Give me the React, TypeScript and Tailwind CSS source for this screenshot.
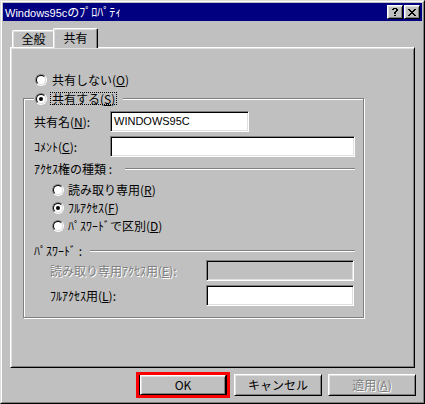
import type { ReactNode } from "react";

const raised =
  "border border-t-white border-l-white border-b-black border-r-black shadow-[inset_1px_1px_0_#dfdfdf,inset_-1px_-1px_0_#808080]";
const sunken =
  "border border-t-[#808080] border-l-[#808080] border-b-white border-r-white shadow-[inset_1px_1px_0_#000,inset_-1px_-1px_0_#dfdfdf]";
const disabledText = "text-[#808080] [text-shadow:1px_1px_0_#fff]";

function Key({ k }: { k: string }) {
  return (
    <>
      (<span className="underline underline-offset-1">{k}</span>)
    </>
  );
}

function Radio({ checked = false }: { checked?: boolean }) {
  return (
    <span className="block w-[12px] h-[12px] shrink-0 rounded-full border border-t-[#808080] border-l-[#808080] border-b-white border-r-white">
      <span className="flex items-center justify-center w-full h-full rounded-full border border-t-black border-l-black border-b-[#dfdfdf] border-r-[#dfdfdf] bg-white">
        {checked && <span className="block w-[4px] h-[4px] rounded-full bg-black" />}
      </span>
    </span>
  );
}

function Pixels({ rows }: { rows: string[] }) {
  const w = rows[0].length;
  const rects: ReactNode[] = [];
  rows.forEach((row, y) =>
    row.split("").forEach((c, x) => {
      if (c === "#") rects.push(<rect key={`${x}-${y}`} x={x} y={y} width={1} height={1} />);
    })
  );
  return (
    <svg width={w} height={rows.length} viewBox={`0 0 ${w} ${rows.length}`} shapeRendering="crispEdges" fill="#000">
      {rects}
    </svg>
  );
}

function CaptionButton({ children }: { children: ReactNode }) {
  return <div className={`w-[16px] h-[14px] bg-[#c0c0c0] flex items-center justify-center ${raised}`}>{children}</div>;
}

function Etched({ className = "" }: { className?: string }) {
  return <div className={`h-[2px] border-t border-t-[#808080] border-b border-b-white ${className}`} />;
}

function DlgButton({ children, disabled = false }: { children: ReactNode; disabled?: boolean }) {
  return (
    <div
      className={`w-[88px] h-[22px] bg-[#c0c0c0] flex items-center justify-center pb-[1px] ${raised} ${disabled ? disabledText : ""}`}
    >
      {children}
    </div>
  );
}

export default function App() {
  return (
    <div className="w-[425px] h-[404px] bg-[#c0c0c0] border border-t-[#dfdfdf] border-l-[#dfdfdf] border-b-black border-r-black font-['Noto_Sans_CJK_JP',sans-serif] text-[12px] leading-none text-black">
      <div className="h-full border border-t-white border-l-white border-b-[#808080] border-r-[#808080] p-[1px] flex flex-col">
        {/* title bar */}
        <div className="h-[18px] shrink-0 bg-[#000080] flex items-center justify-between pl-[2px] pr-[2px]">
          <span className="text-white">
            <span className="font-['Liberation_Sans',sans-serif] text-[11px]">Windows95c</span>のﾌﾟﾛﾊﾟﾃｨ
          </span>
          <div className="flex gap-[1px]">
            <CaptionButton>
              <Pixels rows={[".####.", "##..##", "....##", "...##.", "..##..", "..##..", "......", "..##.."]} />
            </CaptionButton>
            <CaptionButton>
              <Pixels rows={["##....##", ".##..##.", "..####..", "...##...", "..####..", ".##..##.", "##....##"]} />
            </CaptionButton>
          </div>
        </div>

        {/* tabs */}
        <div className="h-[26px] shrink-0 flex items-end pl-[9px]">
          <div className="w-[43px] h-[17px] flex items-center justify-center border-t border-l border-t-white border-l-white border-r border-r-black rounded-tl-[2px] rounded-tr-[2px] shadow-[inset_-1px_0_0_#808080,inset_1px_1px_0_#dfdfdf]">
            全般
          </div>
          <div className="relative z-10 -ml-[2px] -mb-[1px] w-[45px] h-[20px] bg-[#c0c0c0] flex items-center justify-center pb-[2px] border-t border-l border-t-white border-l-white border-r border-r-black rounded-tl-[2px] rounded-tr-[2px] shadow-[inset_-1px_0_0_#808080,inset_1px_1px_0_#dfdfdf]">
            共有
          </div>
        </div>

        {/* panel */}
        <div className={`mx-[7px] h-[321px] shrink-0 pl-[12px] pt-[25px] ${raised}`}>
          <div className="flex items-center gap-[5px] h-[13px] ml-[12px]">
            <Radio />
            <span>
              共有しない<Key k="O" />
            </span>
          </div>

          {/* group box */}
          <div className="mt-[12px] w-[341px] h-[220px] border border-[#808080] shadow-[inset_1px_1px_0_#fff,1px_1px_0_#fff] pl-[10px] pr-[8px]">
            <div className="-mt-[7px] w-fit h-[13px] flex items-center gap-[3px] bg-[#c0c0c0] pl-[1px] pr-[6px]">
              <Radio checked />
              <span className="h-[13px] flex items-center px-[1px] border border-dotted border-black">
                共有する<Key k="S" />
              </span>
            </div>

            <div className="mt-[6px] h-[21px] flex items-center">
              <span className="w-[76px]">
                共有名<Key k="N" />:
              </span>
              <div className={`w-[139px] h-[21px] bg-white flex items-center pl-[3px] font-['Liberation_Sans',sans-serif] text-[11px] ${sunken}`}>
                WINDOWS95C
              </div>
            </div>

            <div className="mt-[4px] h-[21px] flex items-center">
              <span className="w-[76px]">
                ｺﾒﾝﾄ<Key k="C" />:
              </span>
              <div className={`flex-1 h-[21px] bg-white ${sunken}`} />
            </div>

            <div className="mt-[5px] h-[14px] flex items-center">
              <span>ｱｸｾｽ権の種類 :</span>
              <Etched className="flex-1 ml-[13px]" />
            </div>

            <div className="mt-[5px] pl-[18px] flex flex-col">
              <div className="h-[18px] flex items-center gap-[4px]">
                <Radio />
                <span>
                  読み取り専用<Key k="R" />
                </span>
              </div>
              <div className="h-[18px] flex items-center gap-[4px]">
                <Radio checked />
                <span>
                  ﾌﾙｱｸｾｽ<Key k="F" />
                </span>
              </div>
              <div className="h-[18px] flex items-center gap-[4px]">
                <Radio />
                <span>
                  ﾊﾟｽﾜｰﾄﾞで区別<Key k="D" />
                </span>
              </div>
            </div>

            <div className="mt-[9px] h-[14px] flex items-center">
              <span>ﾊﾟｽﾜｰﾄﾞ :</span>
              <Etched className="flex-1 ml-[8px]" />
            </div>

            <div className="mt-[2px] h-[21px] flex items-center pl-[16px]">
              <span className={`w-[156px] ${disabledText}`}>
                読み取り専用ｱｸｾｽ用<Key k="E" />:
              </span>
              <div className={`w-[148px] h-[21px] bg-[#c0c0c0] ${sunken}`} />
            </div>

            <div className="mt-[4px] h-[21px] flex items-center pl-[16px]">
              <span className="w-[156px]">
                ﾌﾙｱｸｾｽ用<Key k="L" />:
              </span>
              <div className={`w-[148px] h-[21px] bg-white ${sunken}`} />
            </div>
          </div>
        </div>

        {/* buttons */}
        <div className="mt-[6px] flex justify-end pr-[6px]">
          <div className="relative mr-[7px]">
            <div className="w-[88px] h-[22px] border border-black">
              <div className={`w-full h-full bg-[#c0c0c0] flex items-center justify-center pb-[1px] ${raised}`}>OK</div>
            </div>
            <div className="absolute -left-[3px] -right-[3px] -top-[2px] -bottom-[2px] border-[3px] border-[#ff0000]" />
          </div>
          <div className="mr-[6px]">
            <DlgButton>キャンセル</DlgButton>
          </div>
          <DlgButton disabled>
            適用<Key k="A" />
          </DlgButton>
        </div>
      </div>
    </div>
  );
}
